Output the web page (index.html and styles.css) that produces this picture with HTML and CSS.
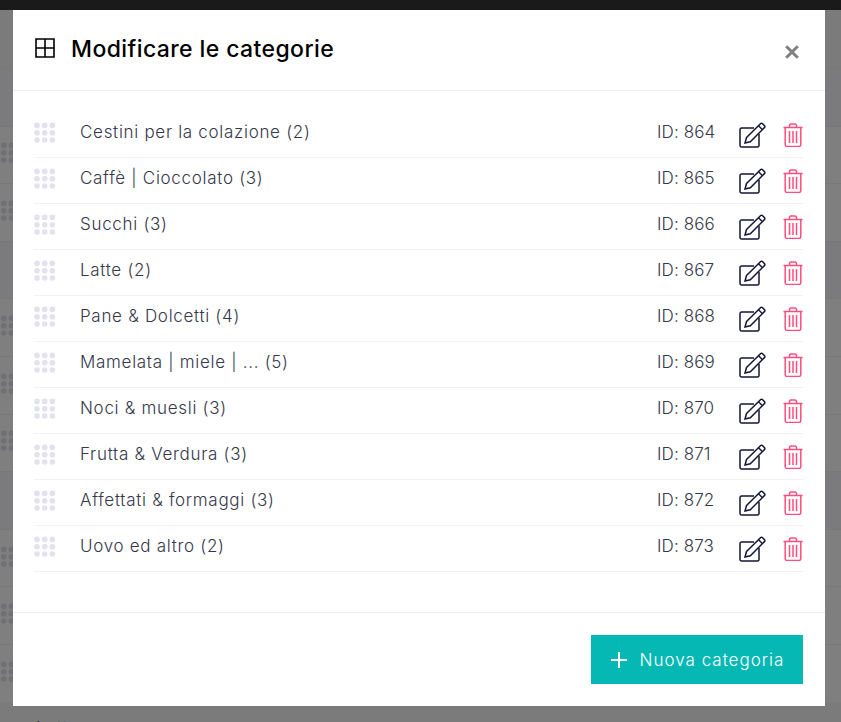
FILE: index.html
```html
<!DOCTYPE html>
<html>
<head>
    <title>Modificare le categorie</title>
    <link rel="stylesheet" href="styles.css">
</head>
<body>
    <svg class="defs" width="0" height="0">
        <symbol id="dots" viewBox="0 0 22 22">
            <circle cx="3" cy="3.4" r="2.8"/><circle cx="10.7" cy="3.4" r="2.8"/><circle cx="18.4" cy="3.4" r="2.8"/>
            <circle cx="3" cy="10.7" r="2.8"/><circle cx="10.7" cy="10.7" r="2.8"/><circle cx="18.4" cy="10.7" r="2.8"/>
            <circle cx="3" cy="18" r="2.8"/><circle cx="10.7" cy="18" r="2.8"/><circle cx="18.4" cy="18" r="2.8"/>
        </symbol>
        <symbol id="edit" viewBox="0 0 27 26">
            <path d="M20 12v11.500a1.500 1.500 0 0 1-1.500 1.500H2.500A1.500 1.500 0 0 1 1 23.500V7.500A1.500 1.500 0 0 1 2.500 6H15"/>
            <path d="M7.500 15.500 21.700 1.500a1.200 1.200 0 0 1 1.700 0l2.200 2.200a1.200 1.200 0 0 1 0 1.700L11.300 19.700l-5.300 1.300z"/>
            <path d="M19.500 3.700l4 4"/>
        </symbol>
        <symbol id="trash" viewBox="0 0 20 24">
            <path d="M.5 4.500h19M6.500 4.500V2.600A1.600 1.600 0 0 1 8.100 1h3.800a1.600 1.600 0 0 1 1.600 1.600v1.900"/>
            <path d="M2.200 4.500V21.500a2 2 0 0 0 2 2h11.600a2 2 0 0 0 2-2V4.500"/>
            <path d="M6.500 8v12M10 8v12M13.500 8v12"/>
        </symbol>
    </svg>

    <div class="topbar"></div>
    <div class="page">
        <div class="bg-row bg-head"></div>
        <div class="bg-row"><svg class="bg-dots"><use href="#dots"/></svg></div>
        <div class="bg-row"><svg class="bg-dots"><use href="#dots"/></svg></div>
        <div class="bg-row bg-head"></div>
        <div class="bg-row"><svg class="bg-dots"><use href="#dots"/></svg></div>
        <div class="bg-row"><svg class="bg-dots"><use href="#dots"/></svg></div>
        <div class="bg-row"><svg class="bg-dots"><use href="#dots"/></svg></div>
        <div class="bg-row bg-head"></div>
        <div class="bg-row"><svg class="bg-dots"><use href="#dots"/></svg></div>
        <div class="bg-row"><svg class="bg-dots"><use href="#dots"/></svg></div>
        <div class="bg-row"><svg class="bg-dots"><use href="#dots"/></svg></div>
        <div class="bg-text">Latte</div>
    </div>

    <div class="overlay"></div>

    <div class="modal">
        <div class="modal-header">
            <svg class="title-icon" viewBox="0 0 20 20">
                <path d="M1 1h18v18H1zM10 1v18M1 10h18"/>
            </svg>
            <h1>Modificare le categorie</h1>
            <svg class="close" viewBox="0 0 14 14">
                <path d="M1.200 1.200l11.600 11.600M12.800 1.200 1.200 12.800"/>
            </svg>
        </div>

        <div class="modal-body">
            <div class="row">
                <svg class="handle"><use href="#dots"/></svg>
                <span class="name">Cestini per la colazione (2)</span>
                <span class="id">ID: 864</span>
                <svg class="edit"><use href="#edit"/></svg>
                <svg class="trash"><use href="#trash"/></svg>
            </div>
            <div class="row">
                <svg class="handle"><use href="#dots"/></svg>
                <span class="name">Caffè | Cioccolato (3)</span>
                <span class="id">ID: 865</span>
                <svg class="edit"><use href="#edit"/></svg>
                <svg class="trash"><use href="#trash"/></svg>
            </div>
            <div class="row">
                <svg class="handle"><use href="#dots"/></svg>
                <span class="name">Succhi (3)</span>
                <span class="id">ID: 866</span>
                <svg class="edit"><use href="#edit"/></svg>
                <svg class="trash"><use href="#trash"/></svg>
            </div>
            <div class="row">
                <svg class="handle"><use href="#dots"/></svg>
                <span class="name">Latte (2)</span>
                <span class="id">ID: 867</span>
                <svg class="edit"><use href="#edit"/></svg>
                <svg class="trash"><use href="#trash"/></svg>
            </div>
            <div class="row">
                <svg class="handle"><use href="#dots"/></svg>
                <span class="name">Pane &amp; Dolcetti (4)</span>
                <span class="id">ID: 868</span>
                <svg class="edit"><use href="#edit"/></svg>
                <svg class="trash"><use href="#trash"/></svg>
            </div>
            <div class="row">
                <svg class="handle"><use href="#dots"/></svg>
                <span class="name">Mamelata | miele | ... (5)</span>
                <span class="id">ID: 869</span>
                <svg class="edit"><use href="#edit"/></svg>
                <svg class="trash"><use href="#trash"/></svg>
            </div>
            <div class="row">
                <svg class="handle"><use href="#dots"/></svg>
                <span class="name">Noci &amp; muesli (3)</span>
                <span class="id">ID: 870</span>
                <svg class="edit"><use href="#edit"/></svg>
                <svg class="trash"><use href="#trash"/></svg>
            </div>
            <div class="row">
                <svg class="handle"><use href="#dots"/></svg>
                <span class="name">Frutta &amp; Verdura (3)</span>
                <span class="id">ID: 871</span>
                <svg class="edit"><use href="#edit"/></svg>
                <svg class="trash"><use href="#trash"/></svg>
            </div>
            <div class="row">
                <svg class="handle"><use href="#dots"/></svg>
                <span class="name">Affettati &amp; formaggi (3)</span>
                <span class="id">ID: 872</span>
                <svg class="edit"><use href="#edit"/></svg>
                <svg class="trash"><use href="#trash"/></svg>
            </div>
            <div class="row">
                <svg class="handle"><use href="#dots"/></svg>
                <span class="name">Uovo ed altro (2)</span>
                <span class="id">ID: 873</span>
                <svg class="edit"><use href="#edit"/></svg>
                <svg class="trash"><use href="#trash"/></svg>
            </div>
        </div>

        <div class="modal-footer">
            <button class="add-button" type="button">
                <svg class="plus" viewBox="0 0 18 18"><path d="M9 1v16M1 9h16"/></svg>
                Nuova categoria
            </button>
        </div>
    </div>
</body>
</html>
```
FILE: styles.css
```css
html, body {
    height: 100%;
}
body {
    margin: 0;
    overflow: hidden;
    font-family: Inter, "Open Sans", sans-serif;
    background-color: #f6f6f8;
    color: #35384a;
}
.defs {
    position: absolute;
}
.topbar {
    height: 10px;
    background-color: #343434;
}
.page {
    padding-top: 58px;
}
.bg-row {
    height: 56.6px;
    border-top: 1px solid #f0f0f2;
    background-color: #fff;
    display: flex;
    align-items: center;
    overflow: hidden;
}
.bg-row.bg-head {
    background-color: #f6f6fa;
}
.bg-dots {
    width: 22px;
    height: 22px;
    margin: -3px 0 0 -7px;
    fill: #dfdfea;
}
.bg-text {
    padding: 16px 0 0 36px;
    font-size: 17px;
    letter-spacing: 0.7px;
}
.overlay {
    position: fixed;
    inset: 0;
    background-color: rgba(0, 0, 0, 0.5);
}
.modal {
    position: fixed;
    top: 10px;
    left: 13px;
    width: 812px;
    height: 696px;
    background-color: #fff;
    display: flex;
    flex-direction: column;
}
.modal-header {
    height: 80px;
    padding: 0 26px 0 22px;
    border-bottom: 1px solid #ebebf2;
    display: flex;
    align-items: center;
}
.title-icon {
    width: 20px;
    height: 20px;
    margin: -4px 16px 0 0;
    fill: none;
    stroke: #000;
    stroke-width: 1.6;
}
h1 {
    margin: -2px 0 0;
    flex: 1;
    font-size: 23px;
    font-weight: 500;
    letter-spacing: 0.4px;
    color: #000;
}
.close {
    width: 14px;
    height: 14px;
    margin-top: 3px;
    fill: none;
    stroke: #808080;
    stroke-width: 3;
}
.modal-body {
    flex: 1;
    padding: 21px 22px 0 21px;
}
.row {
    height: 45px;
    border-bottom: 1px solid #f2f2f5;
    display: flex;
    align-items: center;
}
.handle {
    width: 22px;
    height: 22px;
    margin: -4px 24px 0 0;
    fill: #e2e2ee;
}
.name {
    flex: 1;
    font-size: 17px;
    font-weight: 300;
    letter-spacing: 0.7px;
    margin-top: -5px;
}
.id {
    width: 82px;
    font-size: 17px;
    font-weight: 300;
    letter-spacing: 0.1px;
    margin-top: -5px;
}
.edit {
    width: 27px;
    height: 26px;
    margin-right: 17px;
    fill: none;
    stroke: #14143a;
    stroke-width: 1.5;
}
.trash {
    width: 20px;
    height: 24px;
    fill: none;
    stroke: #ff4d7d;
    stroke-width: 1.5;
}
.modal-footer {
    height: 94px;
    padding: 22px 22px 0 0;
    box-sizing: border-box;
    border-top: 1px solid #ebebf2;
    display: flex;
    justify-content: flex-end;
    align-items: flex-start;
}
.add-button {
    width: 212px;
    height: 49px;
    border: none;
    background-color: #05b8b4;
    color: #fff;
    font-family: inherit;
    font-size: 17px;
    font-weight: 300;
    letter-spacing: 1px;
    display: flex;
    align-items: center;
    justify-content: center;
    gap: 12px;
}
.plus {
    width: 18px;
    height: 18px;
    fill: none;
    stroke: #fff;
    stroke-width: 2;
}
```
